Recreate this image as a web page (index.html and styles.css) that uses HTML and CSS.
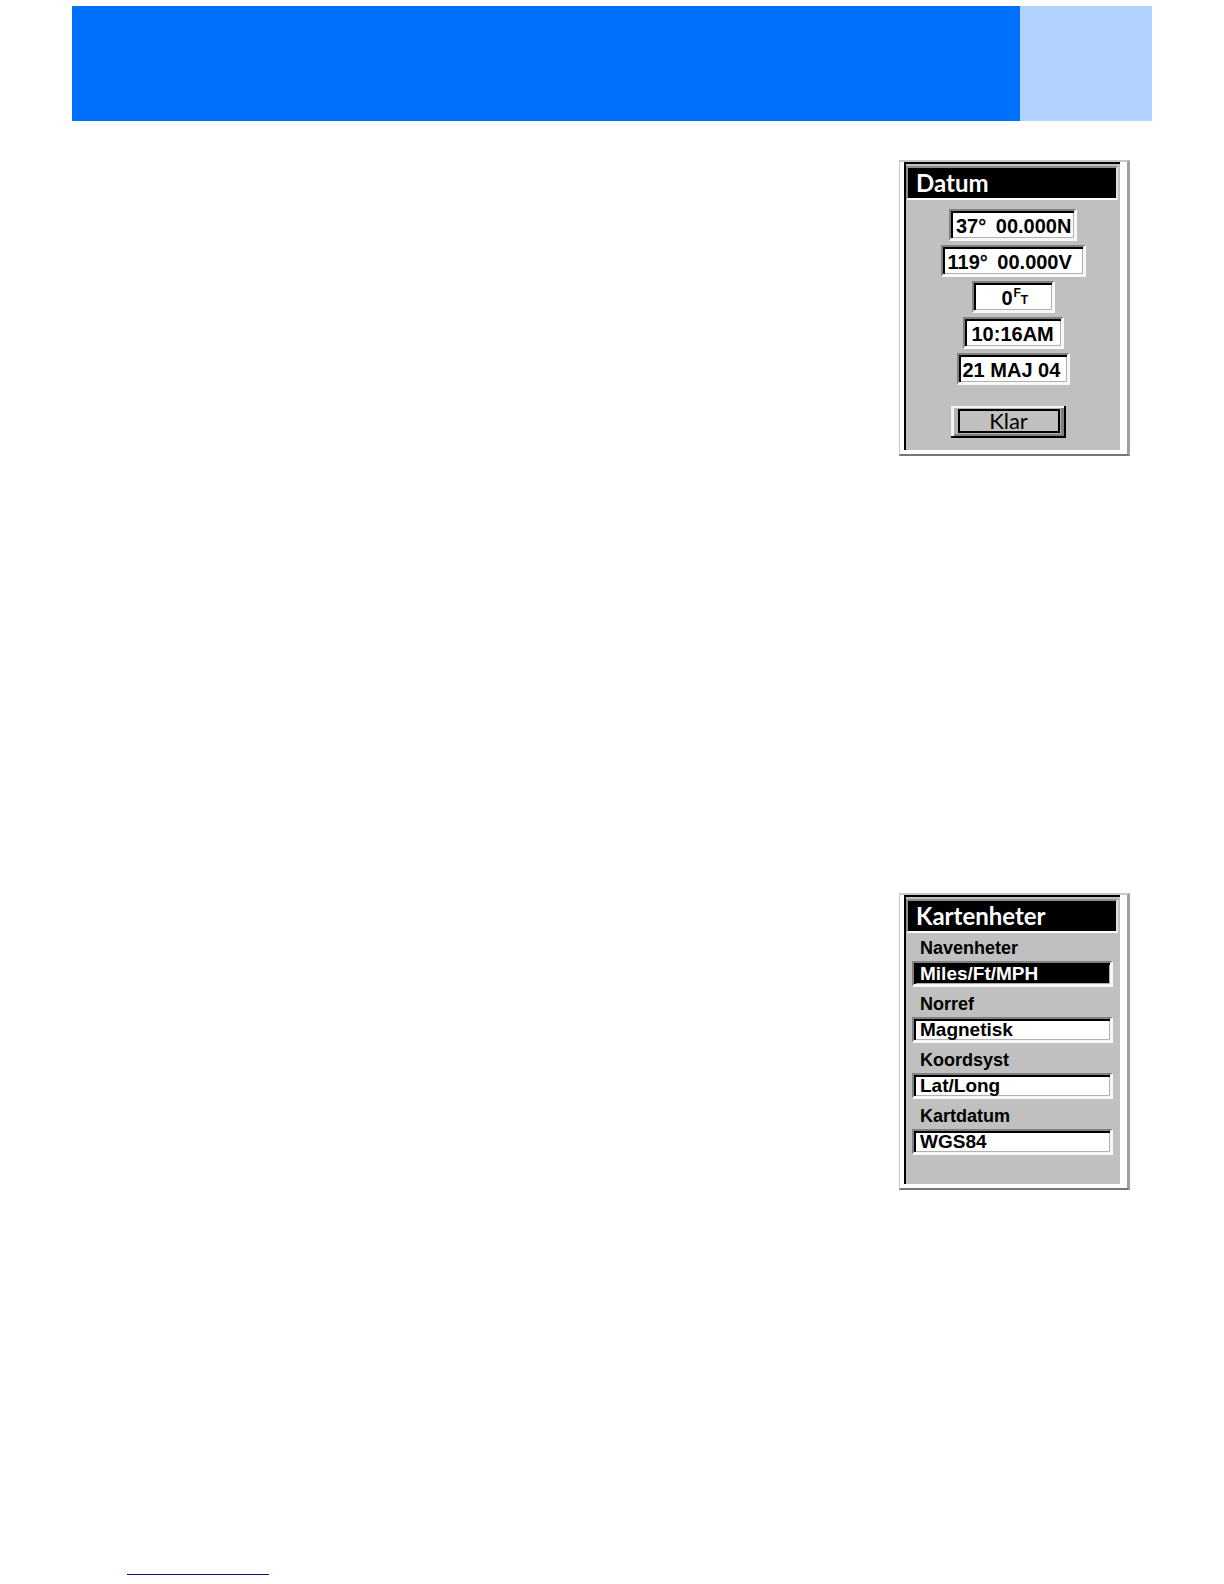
FILE: index.html
```html
<!DOCTYPE html>
<html lang="sv">
<head>
<meta charset="utf-8">
<meta name="viewport" content="width=device-width, initial-scale=1">
<title>Datum – Kartenheter</title>
<link rel="stylesheet" href="styles.css">
</head>
<body>
<header class="banner"><div class="banner-tab"></div></header>
<main class="screens">
  <form class="screen">
    <div class="screen-body">
      <h2 class="title">Datum</h2>
      <div class="position">
        <div class="well latitude"><input type="text" aria-label="Latitud" value="37° &thinsp;00.000N"></div>
        <div class="well longitude"><input type="text" aria-label="Longitud" value="119° &thinsp;00.000V"></div>
        <div class="well altitude"><input type="text" aria-label="Höjd" value="0"><span class="unit"><span class="unit-high">F</span><span class="unit-low">T</span></span></div>
        <div class="well time"><input type="text" aria-label="Tid" value="10:16AM"></div>
        <div class="well date"><input type="text" aria-label="Datum" value="21 MAJ 04"></div>
      </div>
      <button class="done" type="button"><span class="done-face">Klar</span></button>
    </div>
  </form>
  <form class="screen">
    <div class="screen-body">
      <h2 class="title">Kartenheter</h2>
      <div class="units">
        <div class="option">
          <label for="nav">Navenheter</label>
          <select id="nav" class="active"><option>Miles/Ft/MPH</option></select>
        </div>
        <div class="option">
          <label for="north">Norref</label>
          <select id="north"><option>Magnetisk</option></select>
        </div>
        <div class="option">
          <label for="coord">Koordsyst</label>
          <select id="coord"><option>Lat/Long</option></select>
        </div>
        <div class="option">
          <label for="datum">Kartdatum</label>
          <select id="datum"><option>WGS84</option></select>
        </div>
      </div>
    </div>
  </form>
</main>
<footer class="footer"><a class="footer-link" href="#" aria-label="Till början"></a></footer>
</body>
</html>
```

FILE: styles.css
```css
* {
  box-sizing: border-box;
}

body {
  margin: 0;
  padding-top: 6px;
  background: #fff;
  color: #000;
  font-family: "Liberation Sans", Arial, sans-serif;
}

.banner {
  display: flex;
  justify-content: flex-end;
  height: 115px;
  margin: 0 72px;
  background: #0070ff;
}

.banner-tab {
  width: 132px;
  background: #b2d3ff;
}

.screens {
  display: flex;
  flex-direction: column;
  align-items: flex-end;
  gap: 437px;
  padding: 39px 94px 0 72px;
}

/* Raised outer frame of a receiver screen */
.screen {
  width: 231px;
  border: 1px solid #c8c8c8;
  border-width: 2px 3px 2px 1px;
  border-right-color: #a0a0a0;
  border-bottom-color: #777;
  background: #fff;
  padding: 0 7px 4px 4px;
}

.screen-body {
  min-height: 288px;
  border-top: 2px solid #000;
  border-left: 2px solid #000;
  background: #c0c0c0;
  padding: 2px 2px 0 0;
  display: flex;
  flex-direction: column;
}

.title {
  margin: 0;
  border: 2px solid #8c8c8c;
  border-right-color: #e0e0e0;
  border-bottom-color: #fff;
  background: #000;
  color: #fff;
  padding: 0 8px;
  font: 700 24px/30px "Comic Sans MS", Lato, sans-serif;
}

.position {
  display: flex;
  flex-direction: column;
  align-items: center;
  gap: 4px;
  padding: 9px 0 0 2px;
}

.well,
select {
  border: 2px solid #808080;
  border-right: 3px solid #f8f8f8;
  border-bottom: 3px solid #f8f8f8;
  background: #fff;
  box-shadow: inset 2px 2px #000, inset -1px -1px #b0b0b0;
}

.well {
  display: flex;
  height: 32px;
  padding-left: 5px;
}

.well input {
  min-width: 0;
  width: 100%;
  border: 0;
  padding: 2px 0 0;
  background: none;
  outline: none;
  color: #000;
  font: 700 20px/24px "Liberation Sans", Arial, sans-serif;
}

.latitude { width: 128px; }
.longitude { width: 145px; }
.altitude { width: 83px; padding-left: 28px; }
.time { width: 101px; padding-left: 7px; }
.date { width: 113px; padding-left: 4px; }

.well.altitude input {
  width: 12px;
}

.unit {
  display: flex;
  font-size: 12px;
  font-weight: 700;
  line-height: 12px;
}

.unit-high { padding-top: 4px; }
.unit-low { padding-top: 11px; }

/* Raised push button with a black focus frame */
.done {
  display: flex;
  align-self: center;
  width: 115px;
  height: 32px;
  margin: 21px 8px 0 0;
  border: 0 solid #000;
  border-width: 0 2px 2px 0;
  padding: 3px 4px 3px 7px;
  background: #b4b4b4;
  box-shadow: inset 3px 2px #f4f4f4, inset -3px -2px #808080;
}

.done-face {
  flex: 1;
  border: 2px solid #000;
  background: #c0c0c0;
  color: #000;
  font: 400 22px/20px "Comic Sans MS", Lato, sans-serif;
}

.units {
  display: flex;
  flex-direction: column;
  gap: 6px;
  padding: 4px 5px 29px 6px;
}

.option {
  display: flex;
  flex-direction: column;
  gap: 2px;
}

.option label {
  padding-left: 8px;
  font-size: 18px;
  font-weight: 700;
  line-height: 22px;
}

select {
  appearance: none;
  width: 100%;
  height: 26px;
  border-radius: 0;
  padding: 0 6px;
  color: #000;
  font: 700 19px/21px "Liberation Sans", Arial, sans-serif;
}

select.active {
  background: #000;
  color: #fff;
}

.footer {
  padding: 384px 127px 8px;
}

.footer-link {
  display: block;
  width: 142px;
  border-bottom: 1px solid #160a80;
}
```
